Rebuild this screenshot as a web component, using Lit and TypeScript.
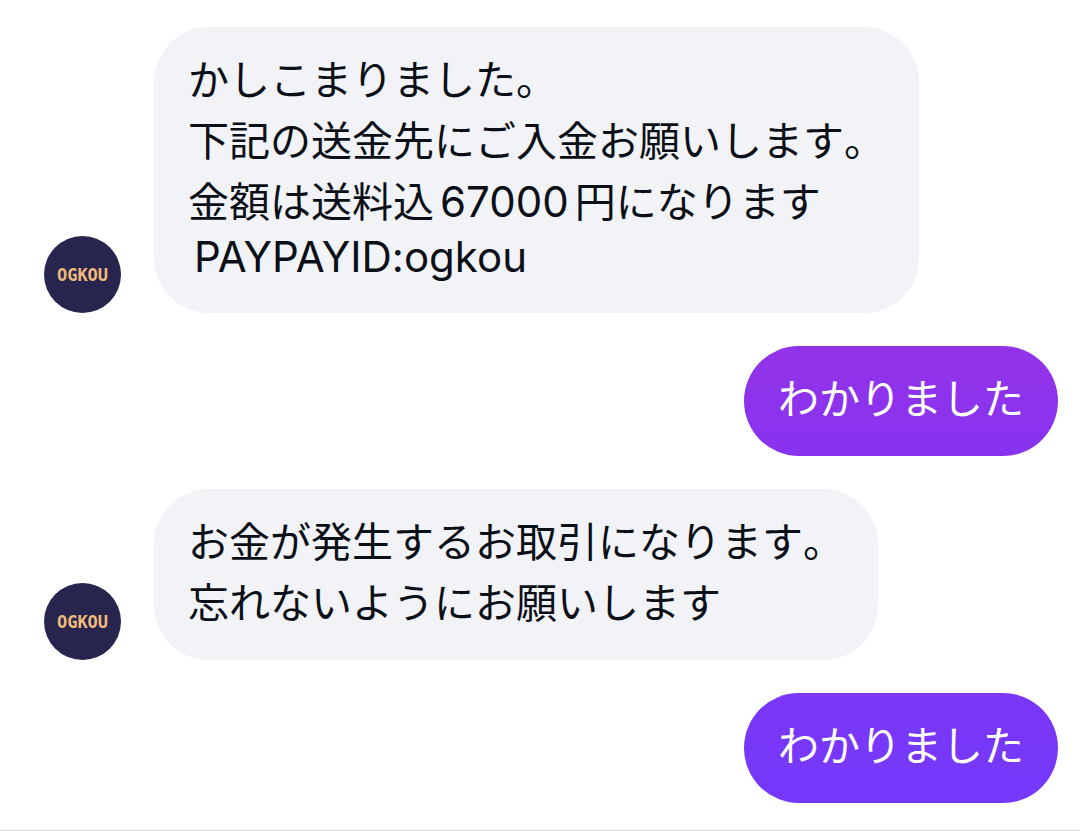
import { LitElement, html, css } from "lit";
import { customElement, property } from "lit/decorators.js";

interface Run {
  text: string;
  latin?: boolean;
}

interface Message {
  from: "them" | "me";
  tone?: "upper" | "lower";
  lines: Run[][];
}

const messages: Message[] = [
  {
    from: "them",
    lines: [
      [{ text: "かしこまりました。" }],
      [{ text: "下記の送金先にご入金お願いします。" }],
      [{ text: "金額は送料込" }, { text: "67000", latin: true }, { text: "円になります" }],
      [{ text: "PAYPAYID:ogkou", latin: true }],
    ],
  },
  { from: "me", tone: "upper", lines: [[{ text: "わかりました" }]] },
  {
    from: "them",
    lines: [
      [{ text: "お金が発生するお取引になります。" }],
      [{ text: "忘れないようにお願いします" }],
    ],
  },
  { from: "me", tone: "lower", lines: [[{ text: "わかりました" }]] },
];

@customElement("chat-avatar")
export class ChatAvatar extends LitElement {
  static styles = css`
    :host {
      display: flex;
      flex: none;
      align-items: center;
      justify-content: center;
      width: 77px;
      height: 77px;
      border-radius: 50%;
      background: #27244d;
    }
    .name {
      color: #f0bb7c;
      font: bold 17px/20px "DejaVu Sans Mono", monospace;
    }
  `;

  render() {
    return html`<span class="name">OGKOU</span>`;
  }
}

@customElement("chat-message")
export class ChatMessage extends LitElement {
  @property({ attribute: false }) message!: Message;

  static styles = css`
    :host {
      display: block;
    }
    .row {
      display: flex;
      align-items: flex-end;
      gap: 33px;
    }
    .me {
      justify-content: flex-end;
    }
    .bubble {
      padding: 20px 34px 29px;
      border-radius: 55px;
      background: #f1f3f6;
      color: #0b0f17;
    }
    .upper {
      background: linear-gradient(#9333e8, #8833f0);
      color: #fff;
    }
    .lower {
      background: linear-gradient(#7b36f6, #7439fb);
      color: #fff;
    }
    .line {
      margin: 0;
      font-size: 41px;
      font-kerning: none;
      line-height: 61px;
    }
    .short {
      font-family: Inter, sans-serif;
      line-height: 54px;
    }
    .latin {
      margin: 0 6px;
      font-family: Inter, sans-serif;
      font-size: 42px;
      font-kerning: normal;
      line-height: 42px;
    }
  `;

  render() {
    const { from, tone = "", lines } = this.message;
    return html`
      <div class="row ${from}">
        ${from === "them" ? html`<chat-avatar></chat-avatar>` : ""}
        <div class="bubble ${tone}">
          ${lines.map(
            (runs) => html`<p class="line ${runs.every((r) => r.latin) ? "short" : ""}">${runs.map((r) =>
              r.latin ? html`<span class="latin">${r.text}</span>` : r.text
            )}</p>`
          )}
        </div>
      </div>
    `;
  }
}

@customElement("app-root")
export class AppRoot extends LitElement {
  static styles = css`
    :host {
      display: block;
      box-sizing: border-box;
      min-height: 100vh;
      padding: 27px 22px 27px 44px;
      border-bottom: 1px solid #d6d6d8;
      background: #fff;
      font-family: "Noto Sans CJK JP", sans-serif;
    }
    .thread {
      display: flex;
      flex-direction: column;
      gap: 33px;
    }
  `;

  render() {
    return html`
      <main class="thread" lang="ja">
        ${messages.map((m) => html`<chat-message .message=${m}></chat-message>`)}
      </main>
    `;
  }
}
